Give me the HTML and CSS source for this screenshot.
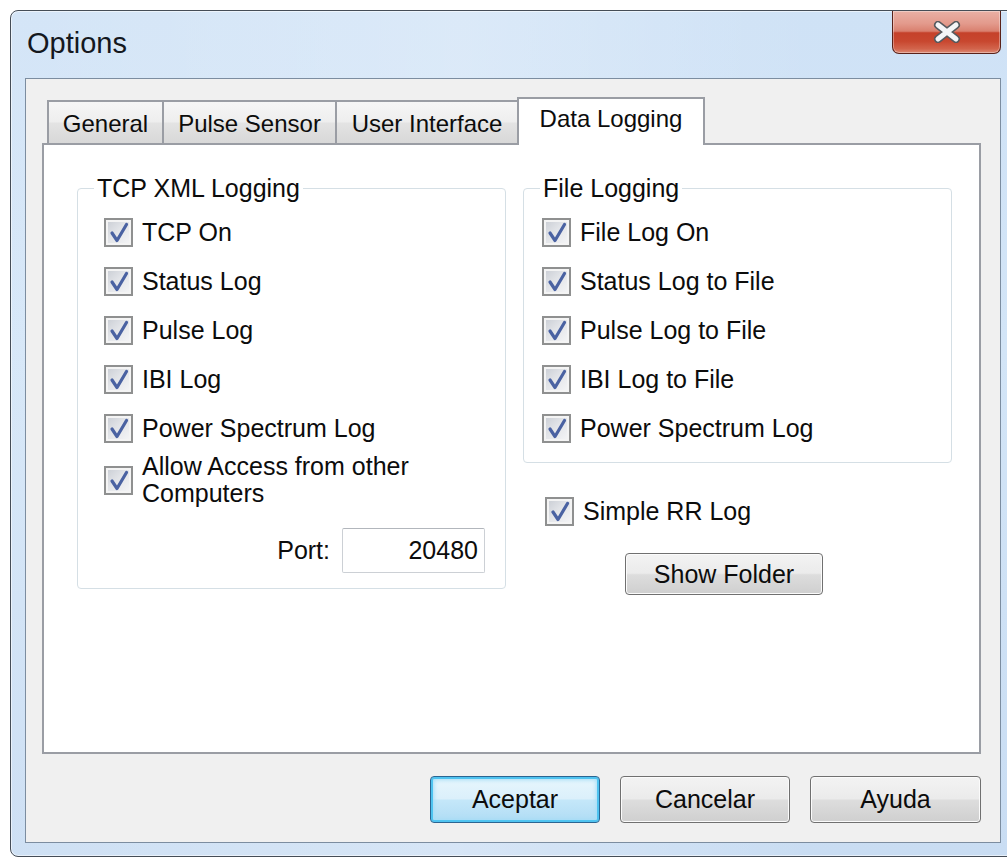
FILE: index.html
```html
<!DOCTYPE html>
<html lang="en">
<head>
<meta charset="utf-8">
<title>Options</title>
<link rel="stylesheet" href="styles.css">
</head>
<body>
<div class="window">
  <div class="titlebar">
    <span class="title">Options</span>
    <button class="close" aria-label="Close">
      <svg width="28" height="22" viewBox="0 0 28 22">
        <path d="M5 4 L23 18 M23 4 L5 18" stroke="#55595e" stroke-width="8" stroke-linecap="round"/>
        <path d="M5 4 L23 18 M23 4 L5 18" stroke="#f4f5f7" stroke-width="5" stroke-linecap="round"/>
      </svg>
    </button>
  </div>

  <div class="client">
    <div class="tabs">
      <div class="tab tab-general">General</div>
      <div class="tab tab-pulse">Pulse Sensor</div>
      <div class="tab tab-ui">User Interface</div>
      <div class="tab tab-active">Data Logging</div>
    </div>

    <div class="panel">
      <fieldset class="group group-tcp">
        <legend>TCP XML Logging</legend>
        <div class="group-body">
          <div class="rows">
            <label class="check"><span class="box"><svg viewBox="0 0 25 25"><path d="M6 13 L11 20.5 L20.5 4.5"/></svg></span><span class="label">TCP On</span></label>
            <label class="check"><span class="box"><svg viewBox="0 0 25 25"><path d="M6 13 L11 20.5 L20.5 4.5"/></svg></span><span class="label">Status Log</span></label>
            <label class="check"><span class="box"><svg viewBox="0 0 25 25"><path d="M6 13 L11 20.5 L20.5 4.5"/></svg></span><span class="label">Pulse Log</span></label>
            <label class="check"><span class="box"><svg viewBox="0 0 25 25"><path d="M6 13 L11 20.5 L20.5 4.5"/></svg></span><span class="label">IBI Log</span></label>
            <label class="check"><span class="box"><svg viewBox="0 0 25 25"><path d="M6 13 L11 20.5 L20.5 4.5"/></svg></span><span class="label">Power Spectrum Log</span></label>
            <label class="check check-wrap"><span class="box"><svg viewBox="0 0 25 25"><path d="M6 13 L11 20.5 L20.5 4.5"/></svg></span><span class="label">Allow Access from other Computers</span></label>
          </div>
          <div class="port-row">
            <span class="port-label">Port:</span>
            <input class="textbox" type="text" value="20480">
          </div>
        </div>
      </fieldset>

      <div class="col-right">
        <fieldset class="group group-file">
          <legend>File Logging</legend>
          <div class="group-body">
            <div class="rows">
              <label class="check"><span class="box"><svg viewBox="0 0 25 25"><path d="M6 13 L11 20.5 L20.5 4.5"/></svg></span><span class="label">File Log On</span></label>
              <label class="check"><span class="box"><svg viewBox="0 0 25 25"><path d="M6 13 L11 20.5 L20.5 4.5"/></svg></span><span class="label">Status Log to File</span></label>
              <label class="check"><span class="box"><svg viewBox="0 0 25 25"><path d="M6 13 L11 20.5 L20.5 4.5"/></svg></span><span class="label">Pulse Log to File</span></label>
              <label class="check"><span class="box"><svg viewBox="0 0 25 25"><path d="M6 13 L11 20.5 L20.5 4.5"/></svg></span><span class="label">IBI Log to File</span></label>
              <label class="check"><span class="box"><svg viewBox="0 0 25 25"><path d="M6 13 L11 20.5 L20.5 4.5"/></svg></span><span class="label">Power Spectrum Log</span></label>
            </div>
          </div>
        </fieldset>
        <label class="check check-solo"><span class="box"><svg viewBox="0 0 25 25"><path d="M6 13 L11 20.5 L20.5 4.5"/></svg></span><span class="label">Simple RR Log</span></label>
        <button class="btn btn-folder">Show Folder</button>
      </div>
    </div>

    <div class="actions">
      <button class="btn btn-default">Aceptar</button>
      <button class="btn">Cancelar</button>
      <button class="btn btn-help">Ayuda</button>
    </div>
  </div>
</div>
</body>
</html>
```

FILE: styles.css
```css
html, body {
  margin: 0;
  padding: 0;
  background: #ffffff;
  overflow: hidden;
}

body {
  font-family: "Liberation Sans", Arial, sans-serif;
  color: #0c0c0c;
}

/* ---- window frame ---- */
.window {
  margin: 10px 0 0 10px;
  width: 1006px;
  height: 847px;
  box-sizing: border-box;
  border: 1px solid #454d57;
  border-radius: 8px;
  padding: 0 14px 13px 14px;
  background:
    linear-gradient(90deg, rgba(255,255,255,0.10), rgba(255,255,255,0.25) 45%, rgba(255,255,255,0) 80%),
    linear-gradient(180deg, #cfe2f6 0%, #d3e5f7 40%, #c9ddf3 100%);
  box-shadow: inset 0 0 0 1px rgba(255,255,255,0.55);
}

.titlebar {
  height: 67px;
  display: flex;
  justify-content: space-between;
  align-items: flex-start;
}

.title {
  padding: 15px 0 0 2px;
  font-size: 29px;
  line-height: 34px;
  color: #14181e;
}

.close {
  width: 109px;
  height: 43px;
  margin: 0;
  padding: 0;
  box-sizing: border-box;
  border: 1px solid #5a2219;
  border-top: none;
  border-radius: 0 0 7px 7px;
  background: linear-gradient(180deg, #e9b0a5 0%, #e39a8c 30%, #d9806f 48%, #c5412a 52%, #c8472f 72%, #d2644c 90%, #dc8a74 100%);
  box-shadow: inset 0 0 0 1px rgba(255,255,255,0.35);
  display: flex;
  align-items: center;
  justify-content: center;
}

/* ---- client area ---- */
.client {
  height: 765px;
  box-sizing: border-box;
  border: 1px solid #7c8da0;
  background: #f0f0f0;
  padding: 18px 19px 19px 16px;
  display: flex;
  flex-direction: column;
}

/* ---- tabs ---- */
.tabs {
  height: 46px;
  display: flex;
  align-items: flex-end;
  padding-left: 5px;
  position: relative;
  z-index: 1;
}

.tab {
  height: 43px;
  box-sizing: border-box;
  border: 2px solid #9a9da4;
  border-bottom: none;
  margin-left: -2px;
  background: linear-gradient(180deg, #f6f6f6 0%, #eeeeee 48%, #e3e3e3 52%, #d8d8d8 100%);
  font-size: 24px;
  line-height: 28px;
  display: flex;
  align-items: center;
  justify-content: center;
  padding-top: 2px;
  color: #0c0c0c;
}

.tab:first-child { margin-left: 0; }
.tab-general { width: 117px; }
.tab-pulse { width: 175px; }
.tab-ui { width: 184px; }

.tab-active {
  width: 188px;
  height: 48px;
  margin-bottom: -2px;
  padding: 0 0 6px 0;
  background: #ffffff;
}

.panel {
  height: 611px;
  box-sizing: border-box;
  border: 2px solid #9a9da4;
  background: #ffffff;
  display: flex;
  align-items: flex-start;
  gap: 17px;
  padding: 29px 0 0 33px;
}

/* ---- group boxes ---- */
.group {
  margin: 0;
  padding: 12px 0 15px 0;
  width: 429px;
  min-width: 0;
  box-sizing: border-box;
  border: 1px solid #d5dfe5;
  border-radius: 4px;
}

.group legend {
  margin-left: 16px;
  padding: 0 3px;
  font-size: 25px;
  line-height: 28px;
  color: #0c0c0c;
}

.group-tcp .group-body { padding: 0 20px 0 26px; }
.group-file { padding-bottom: 16px; }
.group-file .group-body { padding: 0 18px; }

.rows {
  display: flex;
  flex-direction: column;
  gap: 13px;
}

/* ---- check boxes ---- */
.check {
  display: flex;
  align-items: center;
  gap: 9px;
  min-height: 36px;
  font-size: 25px;
  line-height: 29px;
  color: #0c0c0c;
}

.check-wrap { margin-top: -6px; }
.check-wrap .label {
  max-width: 300px;
  line-height: 27px;
}

.check-solo { margin: 30px 0 0 22px; }

.box {
  flex: none;
  width: 29px;
  height: 29px;
  box-sizing: border-box;
  border: 2px solid #8f9090;
  background: linear-gradient(135deg, #c8ccd3 0%, #e2e4e8 45%, #f6f6f7 100%);
  box-shadow: inset 0 0 0 2px #f4f4f4;
  display: flex;
  align-items: center;
  justify-content: center;
}

.box svg {
  width: 25px;
  height: 25px;
  display: block;
}

.box path {
  fill: none;
  stroke: #4a62a2;
  stroke-width: 3.2;
  stroke-linecap: round;
  stroke-linejoin: round;
}

/* ---- port field ---- */
.port-row {
  margin-top: 21px;
  display: flex;
  justify-content: flex-end;
  align-items: center;
  gap: 12px;
  font-size: 25px;
}

.textbox {
  width: 143px;
  height: 45px;
  box-sizing: border-box;
  margin: 0;
  padding: 0 6px;
  border: 1px solid #ccd0d5;
  border-top-color: #b2b6bc;
  border-radius: 2px;
  background: #ffffff;
  text-align: right;
  font-family: "Liberation Sans", Arial, sans-serif;
  font-size: 25px;
  color: #0c0c0c;
}

/* ---- right column ---- */
.col-right {
  display: flex;
  flex-direction: column;
  align-items: flex-start;
}

/* ---- buttons ---- */
.btn {
  height: 47px;
  margin: 0;
  padding: 0;
  box-sizing: border-box;
  border: 1px solid #707070;
  border-radius: 4px;
  background: linear-gradient(180deg, #f3f3f3 0%, #ebebeb 48%, #dddddd 52%, #cfcfcf 100%);
  box-shadow: inset 0 0 0 1px #fbfbfb;
  font-family: "Liberation Sans", Arial, sans-serif;
  font-size: 25px;
  color: #0c0c0c;
}

.btn-folder {
  width: 198px;
  height: 42px;
  margin: 24px 0 0 102px;
}

.actions {
  margin-top: 22px;
  display: flex;
  justify-content: flex-end;
  gap: 20px;
}

.actions .btn { width: 170px; }
.actions .btn-help { width: 171px; }

.btn-default {
  border: 1px solid #2b6592;
  background: linear-gradient(180deg, #e8f6fd 0%, #dbf0fb 48%, #c4e7f9 52%, #b0dcf4 100%);
  box-shadow: inset 0 0 0 2px #4fc3f0, inset 0 0 4px 3px #a6def6;
}
```
